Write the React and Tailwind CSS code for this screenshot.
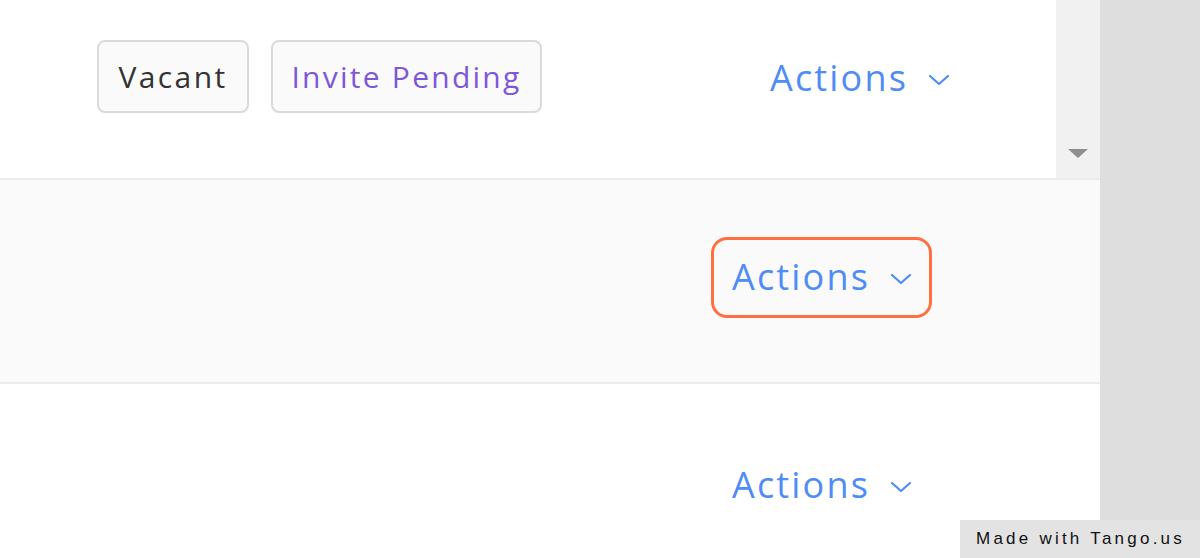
import React from 'react';

const sans = { fontFamily: '"Open Sans", "DejaVu Sans", sans-serif' };

function Chevron({ className }) {
  return (
    <svg className={className} width="22" height="14" viewBox="0 0 22 14" fill="none">
      <path d="M2 3 L11 11 L20 3" stroke="currentColor" strokeWidth="2.2" strokeLinecap="round" strokeLinejoin="round" />
    </svg>
  );
}

function Actions({ boxed }) {
  return (
    <div
      className={
        'flex items-center gap-[20px] rounded-[16px] h-[81px] pl-[18px] pr-[17px] ' +
        (boxed ? 'border-[3px] border-[#ff6f3f]' : 'border-[3px] border-transparent')
      }
    >
      <span className="text-[36px] tracking-[0.06em] text-[#4f8cf6]" style={sans}>Actions</span>
      <Chevron className="text-[#4f8cf6] mt-[4px]" />
    </div>
  );
}

export default function App() {
  return (
    <div className="relative w-[1200px] h-[558px] flex overflow-hidden bg-white">
      <div className="w-[1100px] flex flex-col">
        {/* row 1 */}
        <div className="h-[180px] flex border-b-2 border-[#ececec]">
          <div className="flex-1 flex items-start">
            <div className="flex gap-[22px] ml-[97px] mt-[40px]">
              <div className="h-[73px] w-[152px] flex items-center justify-center rounded-[8px] border-2 border-[#dadada] bg-[#fafafa]">
                <span className="text-[30px] tracking-[0.08em] text-[#333]" style={sans}>Vacant</span>
              </div>
              <div className="h-[73px] w-[271px] flex items-center justify-center rounded-[8px] border-2 border-[#dadada] bg-[#fafafa]">
                <span className="text-[30px] tracking-[0.075em] text-[#7e57d9]" style={sans}>Invite Pending</span>
              </div>
            </div>
            <div className="ml-auto mr-[86px] mt-[37px]">
              <Actions />
            </div>
          </div>
          <div className="w-[44px] bg-[#f1f1f1] flex flex-col items-center justify-end pb-[20px]">
            <div className="w-0 h-0 border-l-[10px] border-r-[10px] border-t-[9px] border-l-transparent border-r-transparent border-t-[#8f8f8f]" />
          </div>
        </div>
        {/* row 2 */}
        <div className="h-[204px] bg-[#fafafa] border-b-2 border-[#ececec] flex items-center justify-end pr-[168px] pb-[8px]">
          <Actions boxed />
        </div>
        {/* row 3 */}
        <div className="flex-1 flex items-start justify-end pr-[168px] pt-[60px]">
          <Actions />
        </div>
      </div>
      <div className="w-[100px] bg-[#dedede]" />
      <div className="absolute left-[960px] top-[520px] w-[240px] h-[38px] bg-[#e3e3e3] flex items-center pl-[16px]">
        <span className="text-[17px] tracking-[0.19em] text-[#111]" style={{ fontFamily: '"Liberation Sans", Arial, sans-serif' }}>
          Made with Tango.us
        </span>
      </div>
    </div>
  );
}
